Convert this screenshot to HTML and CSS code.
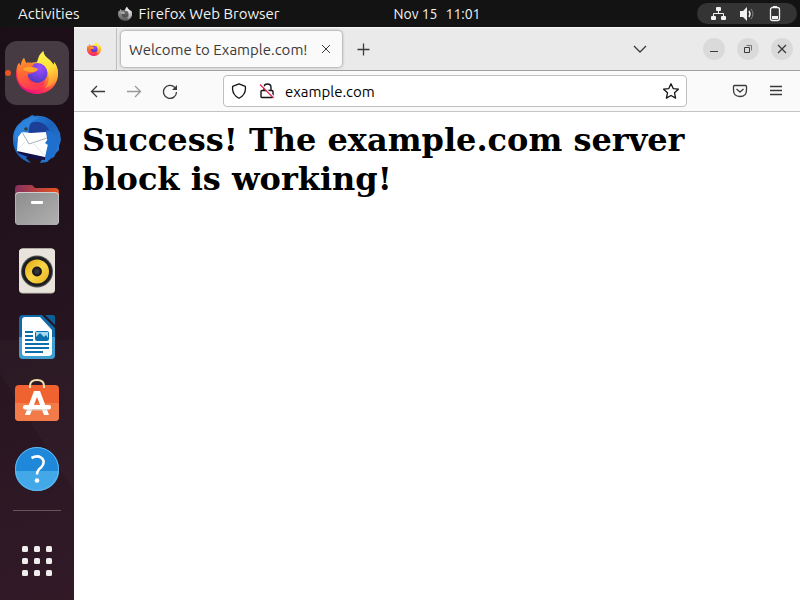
FILE: index.html
```html
<!DOCTYPE html>
<html lang="en">
<head>
<meta charset="utf-8">
<title>Welcome to Example.com!</title>
<link rel="stylesheet" href="styles.css">
</head>
<body>
<svg class="defs" aria-hidden="true">
  <defs>
    <linearGradient id="fx-body" x1=".8" y1=".1" x2=".3" y2=".95"><stop offset="0" stop-color="#fff04a"/><stop offset=".3" stop-color="#ffc02e"/><stop offset=".52" stop-color="#ff7a36"/><stop offset=".78" stop-color="#ff3253"/><stop offset="1" stop-color="#e8127c"/></linearGradient>
    <linearGradient id="fx-flame" x1=".3" y1="0" x2=".6" y2="1"><stop offset="0" stop-color="#fff44f"/><stop offset=".5" stop-color="#ffdf3a"/><stop offset="1" stop-color="#ff8a31"/></linearGradient>
    <linearGradient id="fx-head" x1=".1" y1="0" x2=".4" y2="1"><stop offset="0" stop-color="#ffa028"/><stop offset=".45" stop-color="#ff6a33"/><stop offset="1" stop-color="#ff3655"/></linearGradient>
    <radialGradient id="fx-globe" cx=".6" cy=".25" r=".8"><stop offset="0" stop-color="#a04dfb"/><stop offset=".5" stop-color="#7542e5"/><stop offset="1" stop-color="#4a3bb5"/></radialGradient>
    <linearGradient id="tb-blue" x1="0" y1="0" x2="1" y2="1"><stop offset="0" stop-color="#2d8be0"/><stop offset=".5" stop-color="#1b62bd"/><stop offset="1" stop-color="#2a7fd8"/></linearGradient>
    <linearGradient id="folder-back"><stop offset="0" stop-color="#86305f"/><stop offset="1" stop-color="#e95420"/></linearGradient>
    <linearGradient id="folder-front" x1="0" y1="0" x2="1" y2="1"><stop offset="0" stop-color="#8d8d8d"/><stop offset="1" stop-color="#b0b0b0"/></linearGradient>
    <linearGradient id="cone" x1="0" y1="0" x2="1" y2="1"><stop offset="0" stop-color="#e0a50c"/><stop offset=".5" stop-color="#f9d648"/><stop offset="1" stop-color="#e8b11a"/></linearGradient>
    <symbol id="firefox" viewBox="0 0 48 48">
      <path fill="url(#fx-body)" d="M24 45C12 45 3 36 3 25c0-5 1-9 3-11l2 3c0-3 1-6 3-8l2 5h4l7-1 6-11c1 4 3 6 6 9l5 5 0-3c3 3 4 8 4 12 0 11-9 20-21 20z"/>
      <path fill="url(#fx-flame)" d="M24 14c1-6 3-10 6.500-12 0 5 3 6 6.500 9l4 5v-3c3 4 4 8 4 12-1 7-6 12-13 14 3-4 5-9 3-14-2-6-6-9-11-11z"/>
      <circle cx="24.500" cy="24" r="10" fill="url(#fx-globe)"/>
      <path fill="url(#fx-head)" d="M6 14l2 3c0-3 1-6 3-8l2 5c3-1 6 0 8 1l-2 3 4 3c-1 3-4 3-8 4-2 3 0 7 4 9 5 2 10 0 13-3-1 7-6 10-12 10C10 41 4 34 4 24c0-4 1-8 2-10z"/>
      <path fill="#ffa62a" d="M10 20c4-3 9-3 15 0-1 3-5 3-8 3-3 0-5-1-7-3z"/>
    </symbol>
  </defs>
</svg>

<header class="topbar">
  <div class="topbar-left">
    <button class="top-button" type="button">Activities</button>
    <button class="top-button app-menu" type="button"><svg class="app-icon" viewBox="0 0 48 48" aria-hidden="true"><use href="#firefox"/></svg>Firefox Web Browser</button>
  </div>
  <button class="top-button clock" type="button"><span>Nov 15</span><span>11:01</span></button>
  <div class="topbar-right">
    <button class="status" type="button" aria-label="System menu">
      <svg width="16" height="16" viewBox="0 0 16 16" fill="#f2f2f2" aria-hidden="true"><rect x="5" y="1" width="5" height="4" rx="1"/><rect x="0" y="10" width="5" height="4" rx="1"/><rect x="10" y="10" width="5" height="4" rx="1"/><path d="M2.500 11V7.500h10V11M7.500 4v4" fill="none" stroke="#f2f2f2"/></svg>
      <svg width="16" height="16" viewBox="0 0 16 16" aria-hidden="true"><path fill="#f2f2f2" d="M1 5h3l4-4v14l-4-4H1z"/><path d="M10 5q2 3 0 6" fill="none" stroke="#f2f2f2" stroke-width="1.500"/><path d="M12 3q4 5 0 10" fill="none" stroke="#888"/></svg>
      <svg width="16" height="16" viewBox="0 0 16 16" aria-hidden="true"><rect x="3.500" y="1.500" width="9" height="13" rx="2" fill="none" stroke="#f2f2f2" stroke-width="1.300"/><path fill="#f2f2f2" d="M6 0h4v2H6zM5 10h6v3H5z"/></svg>
    </button>
  </div>
</header>

<div class="desktop">
  <nav class="dock" aria-label="Dock">
    <button class="dock-item active" type="button" aria-label="Firefox"><svg viewBox="0 0 48 48" aria-hidden="true"><use href="#firefox"/></svg></button>
    <button class="dock-item" type="button" aria-label="Thunderbird"><svg viewBox="0 0 48 48" aria-hidden="true">
      <path fill="url(#tb-blue)" d="M16 2l3-2 3 1c10-1 18 4 22 11l3 6 1 7-2 6v4l-3 3-2 4-4 2-3 3-7 1 2-4-13-4-3 3 5 5C7 45 0 37 0 24 0 18 2 12 7 8l3-3z"/>
      <path fill="#1c3f98" d="M15 10c7-6 17-3 21 5l-3 4-18 1c1-3 2-7 0-10z"/>
      <path fill="#2b83dc" d="M8 9C12 4 19 1 26 3c-6 2-9 4-10 10l-2 6-8 2-4 5C1 18 3 13 8 9z"/>
      <path fill="#161048" d="M4 35l28 7v3l-12-1L5 38z"/>
      <path fill="#fff" d="M9 17l9 1 15-1 2 12-3 13L4 36l1-14z"/>
      <path d="M9 17l7 12 18-6" fill="none" stroke="#a9b0bb"/>
      <path d="M12 27l-7 7M21 29l10 11" fill="none" stroke="#e2e5ea"/>
      <path fill="#1f6fce" d="M33 15c8 2 12 8 11 15l-2 8-6 7-3-1 2-9v-5l-3-2 3-4z"/>
      <circle cx="13" cy="14" r="1.800" fill="#3d3a3a"/>
    </svg></button>
    <button class="dock-item" type="button" aria-label="Files"><svg viewBox="0 0 48 48" aria-hidden="true">
      <path fill="url(#folder-back)" d="M2 8q0-4 4-4h12q2 0 3 2l1 1h20q4 0 4 4v12H2z"/>
      <rect x="2" y="11" width="44" height="33" rx="4" fill="#cfcfcf"/><rect x="2.500" y="12" width="43" height="32" rx="4" fill="url(#folder-front)"/><rect x="18" y="20" width="12" height="3" rx="1" fill="#fff"/>
    </svg></button>
    <button class="dock-item" type="button" aria-label="Rhythmbox"><svg viewBox="0 0 48 48" aria-hidden="true">
      <rect x="6" y="1.500" width="36" height="45" rx="4" fill="#c9c4b9"/><rect x="6" y="1.500" width="36" height="44" rx="4" fill="#e8e4db"/>
      <circle cx="24" cy="24.500" r="16" fill="#55565a"/><circle cx="24" cy="24.500" r="15" fill="#1d1d20"/><circle cx="24" cy="24.500" r="12" fill="url(#cone)"/><circle cx="24" cy="24.500" r="5" fill="#1d1d20"/><circle cx="24" cy="24.500" r="2.500" fill="#34363a"/>
    </svg></button>
    <button class="dock-item" type="button" aria-label="LibreOffice Writer"><svg viewBox="0 0 48 48" aria-hidden="true">
      <path fill="#0f6ba8" d="M10 2h19l13 13v27q0 4-4 4H10q-4 0-4-4V6q0-4 4-4z"/><path fill="#3d9fd0" d="M6 24h36v18q0 4-4 4H10q-4 0-4-4z"/>
      <path fill="#fff" d="M12 4h15l12 13v23q0 3-4 3H12q-3 0-3-3V7q0-3 3-3z"/><path fill="#0c5f94" d="M32 2h8q2 0 2 2v8z"/>
      <path d="M12 19h8M12 23h8M12 27h8M12 31h24M12 35h24M12 39h18" stroke="#0b6fad" stroke-width="2"/><rect x="22.500" y="18.500" width="13" height="9" rx="1" fill="#a5d7ef" stroke="#0b6fad"/><path fill="#0b6fad" d="M23 27v-3l4-4 4 4 2-2 2 3v2z"/>
    </svg></button>
    <button class="dock-item" type="button" aria-label="Ubuntu Software"><svg viewBox="0 0 48 48" aria-hidden="true">
      <rect x="2" y="6" width="44" height="36" rx="4" fill="#f0622f"/><path fill="#f37a49" d="M2 24h44v14q0 4-4 4H6q-4 0-4-4z"/>
      <path d="M17 9V7q0-6 7-6t7 6v2" fill="none" stroke="#f3dfae" stroke-width="2"/>
      <path fill="#fff" d="M21 12h6l9 24h-5l-7-18-7 18h-5z"/><rect x="10" y="26" width="28" height="4.500" rx="2" fill="#fff"/><path d="M13 31h22" stroke="#d5cac5"/>
    </svg></button>
    <button class="dock-item" type="button" aria-label="Help"><svg viewBox="0 0 48 48" aria-hidden="true">
      <circle cx="24" cy="24" r="22" fill="#2088da"/><path fill="#43a8e7" d="M2 26h44a22 20 0 0 1-44 0z"/><circle cx="24" cy="24" r="21.500" fill="none" stroke="#62b9ee"/>
      <path d="M18.500 13Q24 10 28 12.500c4 3 3 7 0 10q-4 3-4 7" fill="none" stroke="#fff" stroke-width="2.600"/><circle cx="24" cy="35.500" r="2.300" fill="#fff"/>
    </svg></button>
    <hr class="dock-line">
    <button class="dock-item" type="button" aria-label="Show Applications"><svg viewBox="0 0 48 48" fill="#f0eeec" aria-hidden="true">
      <rect x="9" y="9" width="6" height="6" rx="1.500"/><rect x="21" y="9" width="6" height="6" rx="1.500"/><rect x="33" y="9" width="6" height="6" rx="1.500"/><rect x="9" y="21" width="6" height="6" rx="1.500"/><rect x="21" y="21" width="6" height="6" rx="1.500"/><rect x="33" y="21" width="6" height="6" rx="1.500"/><rect x="9" y="33" width="6" height="6" rx="1.500"/><rect x="21" y="33" width="6" height="6" rx="1.500"/><rect x="33" y="33" width="6" height="6" rx="1.500"/>
    </svg></button>
  </nav>

  <section class="window">
    <div class="tabs">
      <button class="pinned" type="button" aria-label="Firefox View"><svg class="icon" viewBox="0 0 48 48" aria-hidden="true"><use href="#firefox"/></svg></button>
      <div class="tab"><span class="tab-title">Welcome to Example.com!</span><button class="plain" type="button" aria-label="Close tab"><svg class="icon" viewBox="0 0 16 16" aria-hidden="true"><path d="M4 4l8 8M12 4l-8 8"/></svg></button></div>
      <button class="plain new-tab" type="button" aria-label="New tab"><svg class="icon" viewBox="0 0 16 16" aria-hidden="true"><path stroke-width="1.300" d="M8.500 2.500v12M2.500 8.500h12"/></svg></button>
      <button class="plain list-tabs" type="button" aria-label="List all tabs"><svg class="icon" viewBox="0 0 16 16" aria-hidden="true"><path stroke-width="1.300" d="M2 5l6 6 6-6"/></svg></button>
      <div class="controls">
        <button class="control" type="button" aria-label="Minimize"><svg class="icon" viewBox="0 0 16 16" aria-hidden="true"><path d="M4 10.500h8"/></svg></button>
        <button class="control" type="button" aria-label="Restore"><svg class="icon" viewBox="0 0 16 16" aria-hidden="true"><path d="M4.500 6.500h5v5h-5z"/><path stroke="#777" d="M6.500 4.500h5v5"/></svg></button>
        <button class="control" type="button" aria-label="Close"><svg class="icon" viewBox="0 0 16 16" aria-hidden="true"><path stroke-width="1.300" d="M4 4l8 8M12 4l-8 8"/></svg></button>
      </div>
    </div>
    <div class="toolbar">
      <div class="nav-buttons">
        <button class="plain" type="button" aria-label="Back"><svg class="icon" viewBox="0 0 16 16" aria-hidden="true"><path stroke-width="1.300" d="M15 8.500H1.500M7 3L1.500 8.500 7 14"/></svg></button>
        <button class="plain" type="button" aria-label="Forward" disabled><svg class="icon" viewBox="0 0 16 16" aria-hidden="true"><path stroke-width="1.300" d="M1 8.500h13.500M9 3l5.500 5.500L9 14"/></svg></button>
        <button class="plain" type="button" aria-label="Reload"><svg class="icon" viewBox="0 0 16 16" aria-hidden="true"><path stroke-width="1.300" d="M12.800 4.500A6.500 6.500 0 1 0 14.500 9"/><path fill="#3b3b3b" stroke="none" d="M15 2v5h-5z"/></svg></button>
      </div>
      <div class="address">
        <div class="site-info">
          <button class="plain" type="button" aria-label="Tracking protection"><svg class="icon" viewBox="0 0 16 16" aria-hidden="true"><path stroke="#15141a" stroke-width="1.300" d="M8 .8l6.300 2.500q1.200 8-6.300 12Q.5 11.300 1.700 3.300z" stroke-linejoin="round"/></svg></button>
          <button class="plain" type="button" aria-label="Connection is not secure"><svg class="icon" viewBox="0 0 16 16" aria-hidden="true"><path stroke="#15141a" stroke-width="1.400" d="M5 7V4.500Q5 1 8.500 1T12 4.500V7M3 7.500h10q1 0 1 1v5q0 1-1 1H3q-1 0-1-1v-5q0-1 1-1z"/><path stroke="#fff" stroke-width="1.500" d="M2 1l13 13"/><path stroke="#e22850" stroke-width="1.300" d="M1 1.500L14.500 15"/></svg></button>
        </div>
        <input class="url" type="text" value="example.com" aria-label="Address">
        <button class="plain" type="button" aria-label="Bookmark this page"><svg class="icon" viewBox="0 0 16 16" aria-hidden="true"><path stroke="#15141a" stroke-width="1.300" stroke-linejoin="round" d="M8 .8l2.200 4.800 5.200.6-3.900 3.600 1.100 5.300L8 12.500l-4.600 2.600 1.100-5.300L.6 6.200l5.200-.6z"/></svg></button>
      </div>
      <div class="tools">
        <button class="plain" type="button" aria-label="Save to Pocket"><svg class="icon" viewBox="0 0 16 16" aria-hidden="true"><path stroke-width="1.300" stroke-linejoin="round" d="M2.500 2.500h11q1 0 1 1V7q0 6.500-6.500 6.500T1.500 7V3.500q0-1 1-1zM4.500 6L8 9l3.500-3"/></svg></button>
        <button class="plain" type="button" aria-label="Menu"><svg class="icon" viewBox="0 0 16 16" aria-hidden="true"><path stroke-width="1.300" d="M2 3.500h12M2 7.500h12M2 11.500h12"/></svg></button>
      </div>
    </div>
    <main class="page"><h1>Success! The example.com server block is working!</h1></main>
  </section>
</div>
</body>
</html>
```
FILE: styles.css
```css
* { box-sizing: border-box; }

body {
  margin: 0;
  min-height: 100vh;
  display: flex;
  flex-direction: column;
  background: #fff;
  font-family: "Ubuntu", "Noto Sans", "Open Sans", sans-serif;
  font-size: 15px;
}

button {
  margin: 0;
  padding: 0;
  border: 0;
  background: none;
  color: inherit;
  font: inherit;
}

svg { display: block; flex: none; }
.defs { position: absolute; width: 0; height: 0; }

.topbar {
  display: grid;
  grid-template-columns: 1fr auto 1fr;
  align-items: center;
  height: 27px;
  background: #131313;
  color: #f2f2f2;
  white-space: nowrap;
}
.topbar-left { display: flex; gap: 37px; padding-left: 18px; }
.topbar-right { display: flex; justify-content: flex-end; padding-right: 3px; }
.top-button { line-height: 20px; }
.app-menu { display: flex; align-items: center; gap: 6px; }
.app-icon { width: 16px; height: 16px; filter: grayscale(1); }
.clock { display: flex; gap: 8px; padding-left: 74px; font-size: 14px; }
.status {
  display: flex;
  align-items: center;
  gap: 12px;
  height: 21px;
  padding: 0 14px;
  border-radius: 12px;
  background: #343434;
}

.desktop { flex: 1; display: flex; }

.dock {
  flex: none;
  width: 74px;
  display: flex;
  flex-direction: column;
  align-items: center;
  gap: 2px;
  padding-top: 14px;
  background:
    linear-gradient(58deg, transparent 60%, #ffffff05 60%) 0 100% / 100% 260px no-repeat,
    linear-gradient(165deg, #1b0e17, #25141f 50%, #321a27);
}
.dock-item {
  position: relative;
  display: grid;
  place-items: center;
  width: 64px;
  height: 64px;
  border-radius: 12px;
}
.dock-item svg { width: 48px; height: 48px; }
.dock-item.active { background: #473b43; }
.dock-item.active::before {
  content: "";
  position: absolute;
  left: 0;
  width: 6px;
  height: 6px;
  border-radius: 50%;
  background: #e95420;
}
.dock-line { width: 48px; height: 1px; margin: 7px 0 16px; border: 0; background: #65565e; }

.window { flex: 1; min-width: 0; display: flex; flex-direction: column; }

.icon { width: 16px; height: 16px; fill: none; stroke: #3b3b3b; }
.plain { display: grid; place-items: center; }
.plain:disabled { opacity: .5; }

.tabs {
  display: flex;
  align-items: center;
  height: 44px;
  border-top: 1px solid #f8f8f8;
  border-bottom: 1px solid #a0a0a0;
  background: #eaeaea;
  color: #3b3b3b;
}
.pinned {
  display: grid;
  place-items: center;
  align-self: stretch;
  width: 43px;
  padding-right: 3px;
  border-right: 1px solid #bdbdbd;
}
.pinned .icon { stroke: none; }
.tab {
  display: flex;
  align-items: center;
  justify-content: space-between;
  width: 221px;
  height: 36px;
  margin-left: 4px;
  padding: 0 8px;
  border-radius: 4px;
  background: #fafafa;
  box-shadow: 0 0 3px #00000080;
}
.tab-title { white-space: nowrap; }
.new-tab { margin-left: 13px; }
.list-tabs { margin-left: auto; }
.controls { display: flex; gap: 12px; margin: 0 7px 0 55px; }
.control {
  display: grid;
  place-items: center;
  width: 22px;
  height: 22px;
  border-radius: 50%;
  background: #dadada;
}

.toolbar {
  display: flex;
  align-items: center;
  height: 41px;
  padding: 0 16px;
  border-bottom: 1px solid #c4c4c4;
  background: #fafafa;
}
.nav-buttons { display: flex; gap: 20px; margin-right: 45px; }
.address {
  flex: 1;
  display: flex;
  align-items: center;
  gap: 10px;
  height: 32px;
  padding: 0 7px;
  border: 1px solid #bfbfbf;
  border-radius: 4px;
  background: #fff;
}
.site-info { display: flex; gap: 12px; }
.url {
  flex: 1;
  min-width: 0;
  padding: 0;
  border: 0;
  outline: 0;
  background: none;
  color: #000;
  font: inherit;
}
.tools { display: flex; gap: 20px; margin-left: 45px; }

.page { flex: 1; padding: 9px 8px; background: #fff; }
.page h1 {
  margin: 0;
  color: #000;
  font: bold 32px/39px "DejaVu Serif", serif;
}
```
